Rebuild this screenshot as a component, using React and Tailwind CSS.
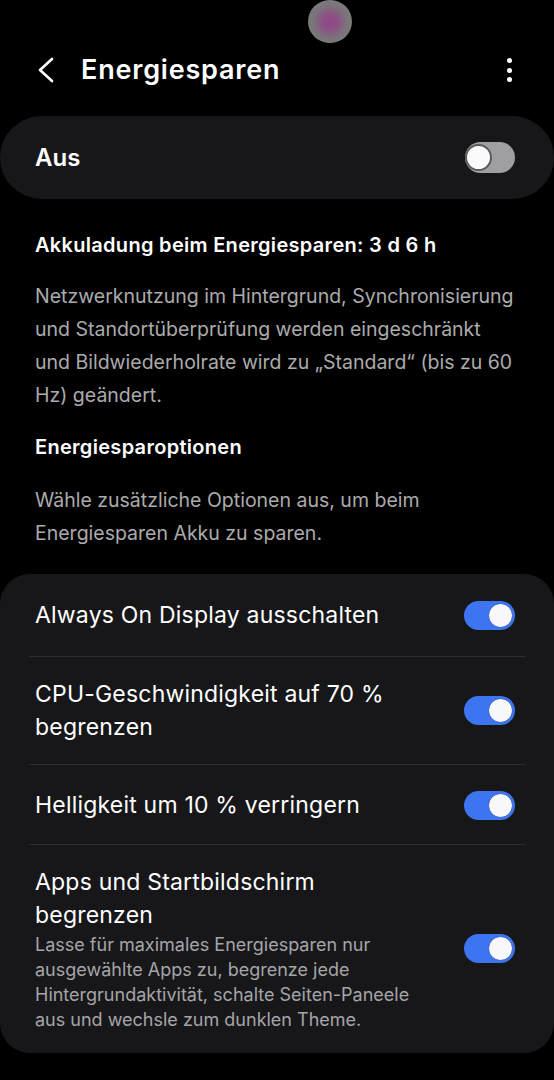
const font = { fontFamily: 'Inter, Roboto, "Noto Sans", sans-serif' };

function Toggle({ on }) {
  if (on) {
    return (
      <div className="relative w-[51px] h-[29px] rounded-full bg-[#3d74ef] shrink-0">
        <div className="absolute right-[2px] top-[2px] w-[25px] h-[25px] rounded-full bg-[#f8f8fa] border-[1.5px] border-[#2f5fcf]" />
      </div>
    );
  }
  return (
    <div className="relative w-[50px] h-[31px] rounded-full bg-[#9e9ea3] shrink-0">
      <div className="absolute left-[0px] top-[2px] w-[27px] h-[27px] rounded-full bg-[#fafafa] border-2 border-[#5a5a5e]" />
    </div>
  );
}

const options = [
  { title: ['Always On Display ausschalten'], py: 'py-[24px]' },
  { title: ['CPU-Geschwindigkeit auf 70 %', 'begrenzen'], py: 'py-[20px]' },
  { title: ['Helligkeit um 10 % verringern'], py: 'pt-[23px] pb-[22px]' },
  {
    title: ['Apps und Startbildschirm', 'begrenzen'],
    desc: [
      'Lasse für maximales Energiesparen nur',
      'ausgewählte Apps zu, begrenze jede',
      'Hintergrundaktivität, schalte Seiten-Paneele',
      'aus und wechsle zum dunklen Theme.',
    ],
    py: 'pt-[20px] pb-[21px]',
  },
];

const intro = [
  'Netzwerknutzung im Hintergrund, Synchronisierung',
  'und Standortüberprüfung werden eingeschränkt',
  'und Bildwiederholrate wird zu „Standard“ (bis zu 60',
  'Hz) geändert.',
];

export default function App() {
  return (
    <div className="relative w-[554px] min-h-[1080px] bg-black text-white overflow-hidden" style={font}>
      {/* camera cutout */}
      <div className="absolute left-[308px] top-0 w-[44px] h-[43px] rounded-full bg-[#7a7a7a] flex items-center justify-center">
        <div className="w-[26px] h-[26px] rounded-full bg-[#8e4b86] blur-[4px]" />
      </div>

      <div className="h-[45px]" />
      <div className="h-[50px] flex items-center pl-[36px] pr-[42px]">
        <svg width="20" height="26" viewBox="0 0 20 26" fill="none" stroke="white" strokeWidth="2.6" strokeLinecap="round" strokeLinejoin="round">
          <path d="M16 2 L4 13 L16 24" />
        </svg>
        <h1 className="ml-[25px] text-[27px] font-semibold tracking-[0.8px] flex-1">Energiesparen</h1>
        <div className="flex flex-col gap-[4.5px] items-center">
          <span className="w-[5px] h-[5px] rounded-full bg-white" />
          <span className="w-[5px] h-[5px] rounded-full bg-white" />
          <span className="w-[5px] h-[5px] rounded-full bg-white" />
        </div>
      </div>

      <div className="mt-[21px] h-[83px] rounded-[42px] bg-[#17171a] flex items-center justify-between pl-[35px] pr-[39px]">
        <span className="text-[24px] font-semibold">Aus</span>
        <Toggle on={false} />
      </div>

      <div className="pl-[35px] pr-[20px]">
        <p className="mt-[32px] text-[20px] leading-[28px] font-semibold tracking-[0.3px]">Akkuladung beim Energiesparen: 3 d 6 h</p>
        <p className="mt-[21px] text-[19.5px] leading-[33px] text-[#ababab]">
          {intro.map((l, i) => (
            <span key={i} className="block whitespace-nowrap">{l}</span>
          ))}
        </p>
        <p className="mt-[21px] text-[20px] leading-[28px] font-semibold tracking-[0.3px]">Energiesparoptionen</p>
        <p className="mt-[23px] text-[19.5px] leading-[33px] text-[#ababab]">
          <span className="block">Wähle zusätzliche Optionen aus, um beim</span>
          <span className="block">Energiesparen Akku zu sparen.</span>
        </p>
      </div>

      <div className="mt-[24px] rounded-[30px] bg-[#17171a]">
        {options.map((o, i) => (
          <div key={i}>
            {i > 0 && <div className="mx-[29px] h-px bg-[#2e2e31]" />}
            <div className={`flex items-center justify-between pl-[35px] pr-[39px] ${o.py}`}>
              <div className="w-[400px]">
                <div className="text-[23px] leading-[33px] tracking-[0.2px] pt-[1px]">
                  {o.title.map((t, j) => (
                    <div key={j}>{t}</div>
                  ))}
                </div>
                {o.desc && (
                  <p className="text-[18px] leading-[25px] text-[#a5a5a8]">
                    {o.desc.map((l, j) => (
                      <span key={j} className="block whitespace-nowrap">{l}</span>
                    ))}
                  </p>
                )}
              </div>
              <Toggle on />
            </div>
          </div>
        ))}
      </div>
    </div>
  );
}
